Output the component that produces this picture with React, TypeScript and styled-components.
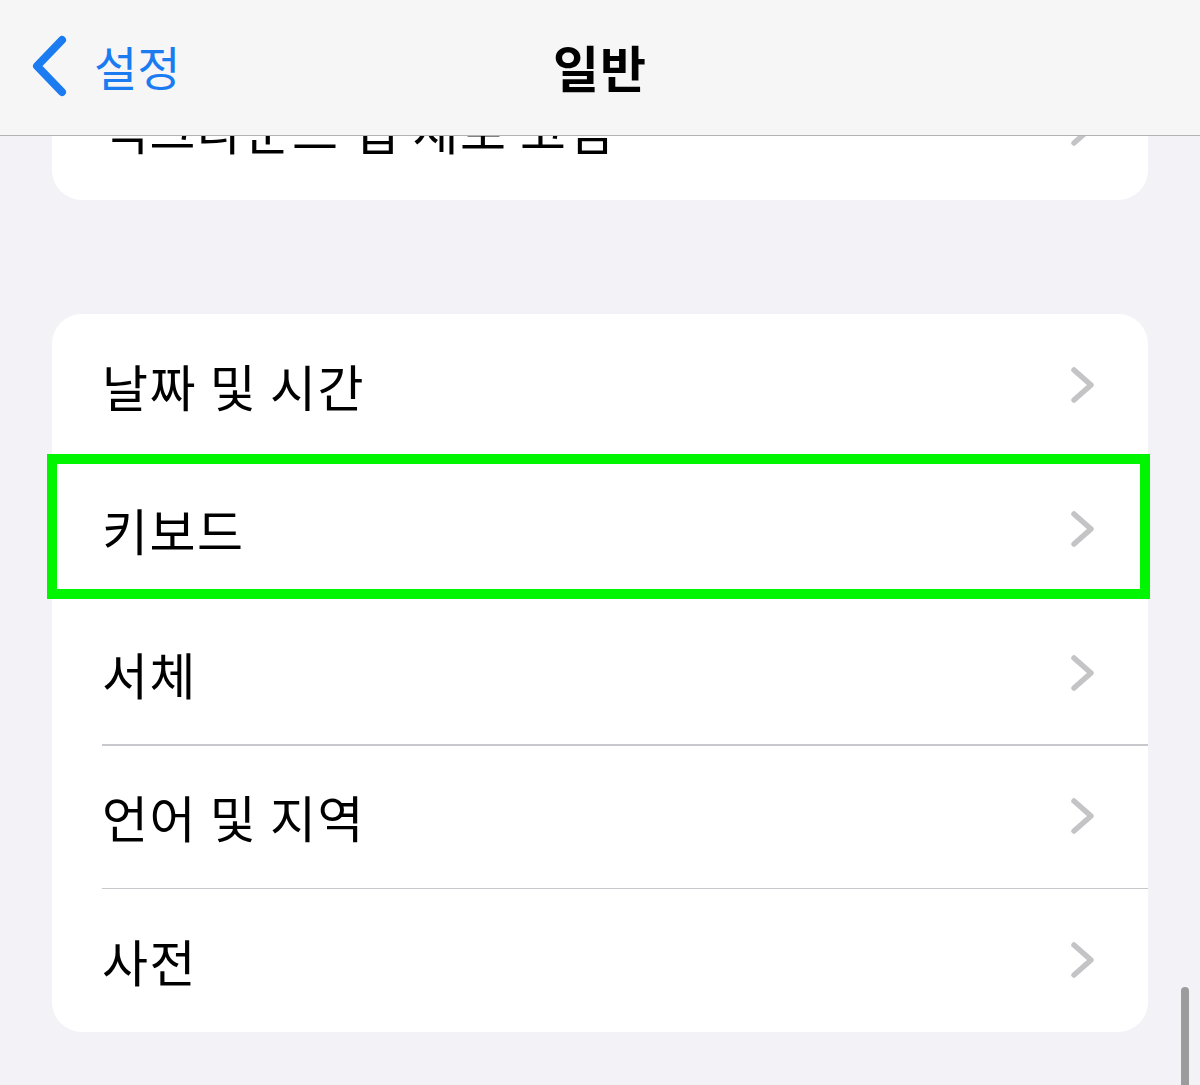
import React from 'react';
import styled, { createGlobalStyle, css } from 'styled-components';

const GlobalStyle = createGlobalStyle`
	html, body {
		margin: 0;
		padding: 0;
		background: #f2f2f7;
	}
	body {
		font-family: "Noto Sans CJK KR", "Noto Sans", sans-serif;
		-webkit-font-smoothing: antialiased;
	}
`;

const Screen = styled.div`
	position: relative;
	width: 1200px;
	height: 1085px;
	overflow: hidden;
	background: #f2f2f7;
`;

const NavBar = styled.header`
	position: absolute;
	top: 0;
	left: 0;
	right: 0;
	z-index: 10;
	height: 136px;
	box-sizing: border-box;
	display: grid;
	grid-template-columns: 1fr auto 1fr;
	align-items: center;
	padding: 0 30px 4px 30px;
	background: #f6f6f6;
	border-bottom: 1.5px solid #b3b3b3;
`;

const BackButton = styled.button`
	justify-self: start;
	display: flex;
	align-items: center;
	gap: 26px;
	padding: 0;
	border: none;
	background: none;
	color: #1b7cf2;
	font-family: inherit;
	font-size: 47px;
	font-weight: 400;
	letter-spacing: 0;
	cursor: pointer;

	svg {
		flex: 0 0 auto;
	}
`;

const Title = styled.h1`
	margin: 0;
	font-size: 50px;
	font-weight: 600;
	color: #000;
	letter-spacing: 1px;
`;

const Content = styled.main`
	display: flex;
	flex-direction: column;
	gap: 114px;
	padding: 0 52px;
	margin-top: 56px;
`;

const Group = styled.section`
	display: flex;
	flex-direction: column;
	background: #fff;
	border-radius: 30px;
`;

const Row = styled.div<{ $highlighted?: boolean }>`
	position: relative;
	height: 143.6px;
	display: flex;
	align-items: center;
	justify-content: space-between;
	padding: 0 52px 0 50px;

	& + & {
		&::before {
			content: '';
			position: absolute;
			top: 0;
			left: 50px;
			right: 0;
			height: 1.5px;
			background: #c8c8cc;
		}
	}

	${props => props.$highlighted && css`
		&::after {
			content: '';
			position: absolute;
			top: -3px;
			left: -5px;
			right: -2px;
			bottom: 2px;
			border: 10px solid #00f500;
			z-index: 2;
		}
	`}
`;

const Label = styled.span`
	font-size: 50px;
	color: #000;
	letter-spacing: 1.5px;
`;

const ScrollIndicator = styled.div`
	position: absolute;
	left: 1181px;
	top: 987px;
	width: 8px;
	height: 120px;
	border-radius: 4px;
	background: #9c9c9c;
`;

const BackChevron = () => (
	<svg width="38" height="62" viewBox="0 0 38 62" fill="none">
		<path d="M32 5 L7 31 L32 57" stroke="currentColor" strokeWidth="8" strokeLinecap="round" strokeLinejoin="round" />
	</svg>
);

const Chevron = () => (
	<svg width="26" height="38" viewBox="0 0 26 38" fill="none">
		<path d="M4 4 L21 19 L4 34" stroke="#c4c4c7" strokeWidth="5.5" strokeLinecap="round" strokeLinejoin="round" />
	</svg>
);

type Item = { label: string; highlighted?: boolean };

const groups: Item[][] = [
	[{ label: '백그라운드 앱 새로 고침' }],
	[
		{ label: '날짜 및 시간' },
		{ label: '키보드', highlighted: true },
		{ label: '서체' },
		{ label: '언어 및 지역' },
		{ label: '사전' },
	],
];

const App = () => {
	return (
		<Screen>
			<GlobalStyle />
			<NavBar>
				<BackButton>
					<BackChevron />
					설정
				</BackButton>
				<Title>일반</Title>
				<div />
			</NavBar>
			<Content>
				{ groups.map((items, i) => (
					<Group key={i}>
						{ items.map(item => (
							<Row key={item.label} $highlighted={item.highlighted}>
								<Label>{ item.label }</Label>
								<Chevron />
							</Row>
						)) }
					</Group>
				)) }
			</Content>
			<ScrollIndicator />
		</Screen>
	);
};

export default App;
